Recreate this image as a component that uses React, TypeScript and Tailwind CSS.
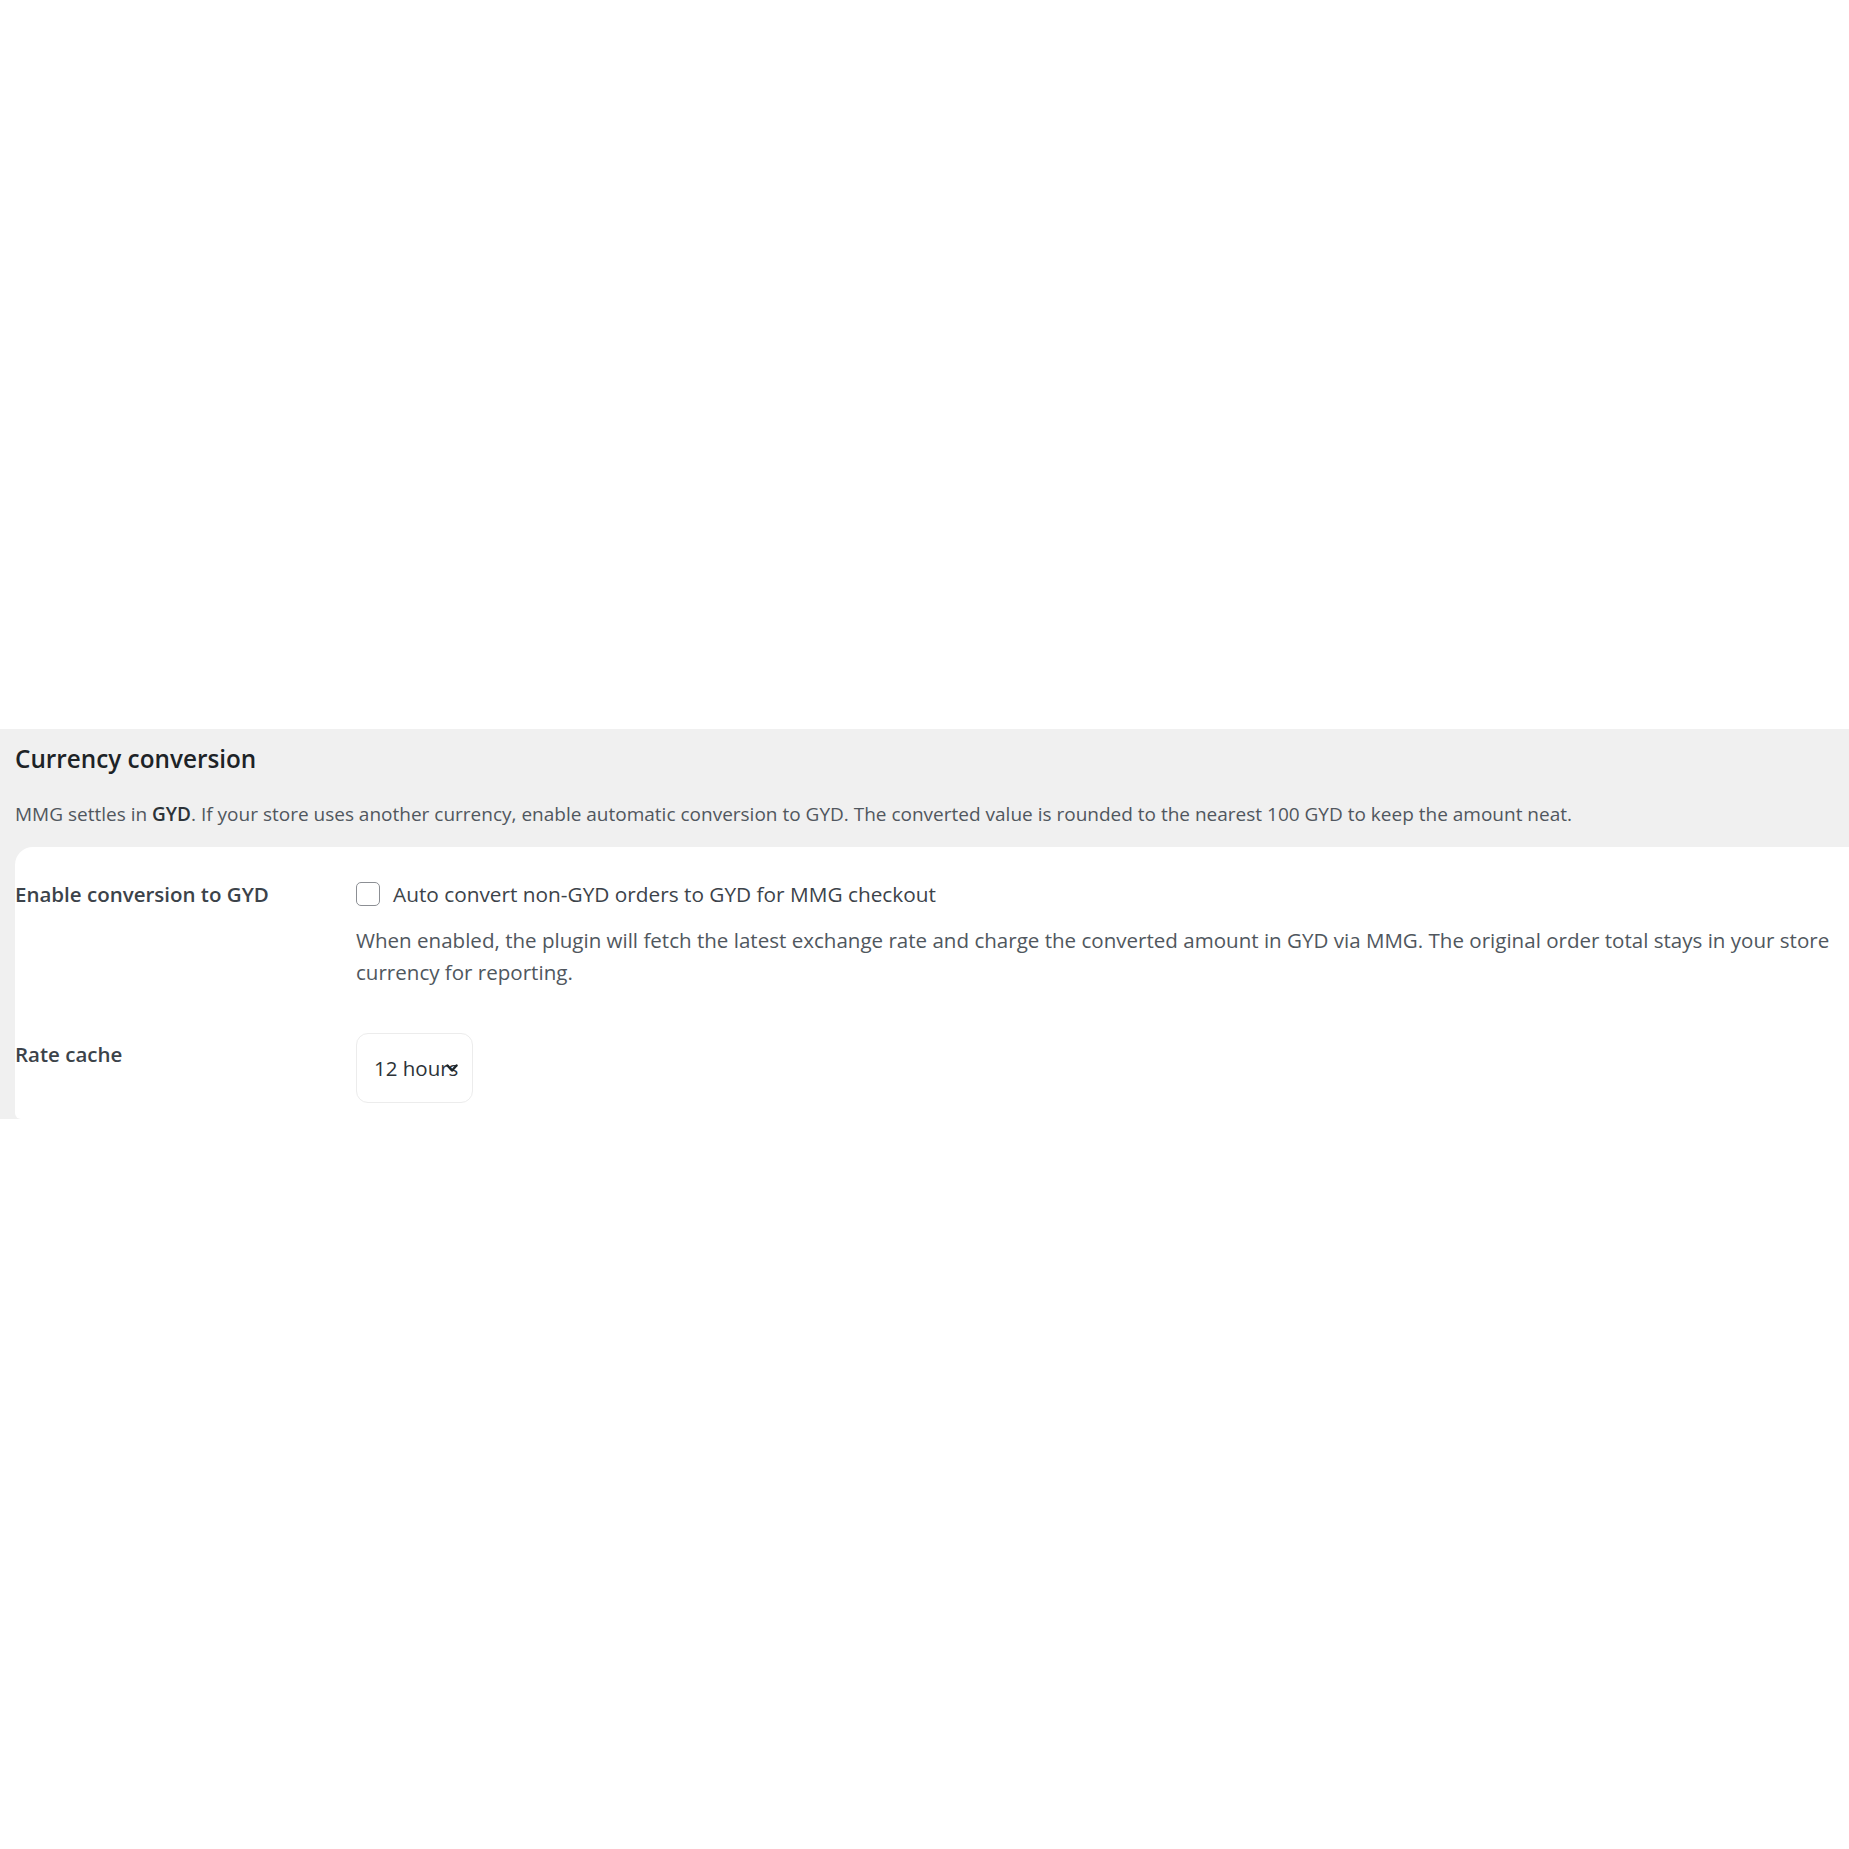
import React from 'react';

const font = { fontFamily: '"Open Sans", "Noto Sans", Arial, sans-serif' };

const App: React.FC = () => {
  return (
    <div className="min-h-[1849px] w-full bg-white pt-[729px]" style={font}>
      <section className="bg-[#f0f0f0] pl-[15px] pt-[14px]">
        <h2 className="text-[24.3px] leading-[32px] font-semibold text-[#1d2327]">Currency conversion</h2>
        <p className="mt-[27px] text-[19px] leading-[24px] text-[#50575e]">
          MMG settles in <strong className="font-semibold text-[#2c3338]">GYD</strong>. If your store uses another currency, enable automatic conversion to GYD. The converted value is rounded to the nearest 100 GYD to keep the amount neat.
        </p>

        <div className="mt-[21px] bg-white rounded-tl-[18px] rounded-bl-[6px] pt-[34px] pb-[16px]">
          <div className="grid grid-cols-[341px_1fr]">
            <div className="text-[20.5px] leading-[26px] font-semibold text-[#3c434a]">Enable conversion to GYD</div>
            <div className="pr-[2px]">
              <label className="flex items-center gap-[13px] text-[20.8px] leading-[26px] text-[#3c434a]">
                <span className="w-[24px] h-[24px] rounded-[5px] border-[1.5px] border-[#8c8f94] bg-white shrink-0" />
                Auto convert non-GYD orders to GYD for MMG checkout
              </label>
              <p className="mt-[17px] text-[20.55px] leading-[32px] text-[#50575e]">
                When enabled, the plugin will fetch the latest exchange rate and charge the converted amount in GYD via MMG. The original order total stays in your store currency for reporting.
              </p>
            </div>

            <div className="mt-[53px] text-[20.5px] leading-[26px] font-semibold text-[#3c434a]">Rate cache</div>
            <div className="mt-[45px]">
              <div className="relative w-[117px] h-[70px] rounded-[12px] border border-[#ececec] bg-white flex items-center pl-[17px] text-[20.5px] text-[#2c3338]">
                12 hours
                <svg className="absolute left-[89px] top-[29px]" width="12" height="10" viewBox="0 0 12 10">
                  <path d="M1.5 2.5 L6 7.5 L10.5 2.5" fill="none" stroke="#1d2327" strokeWidth="2.4" strokeLinecap="round" strokeLinejoin="round" />
                </svg>
              </div>
            </div>
          </div>
        </div>
      </section>
    </div>
  );
};

export default App;
